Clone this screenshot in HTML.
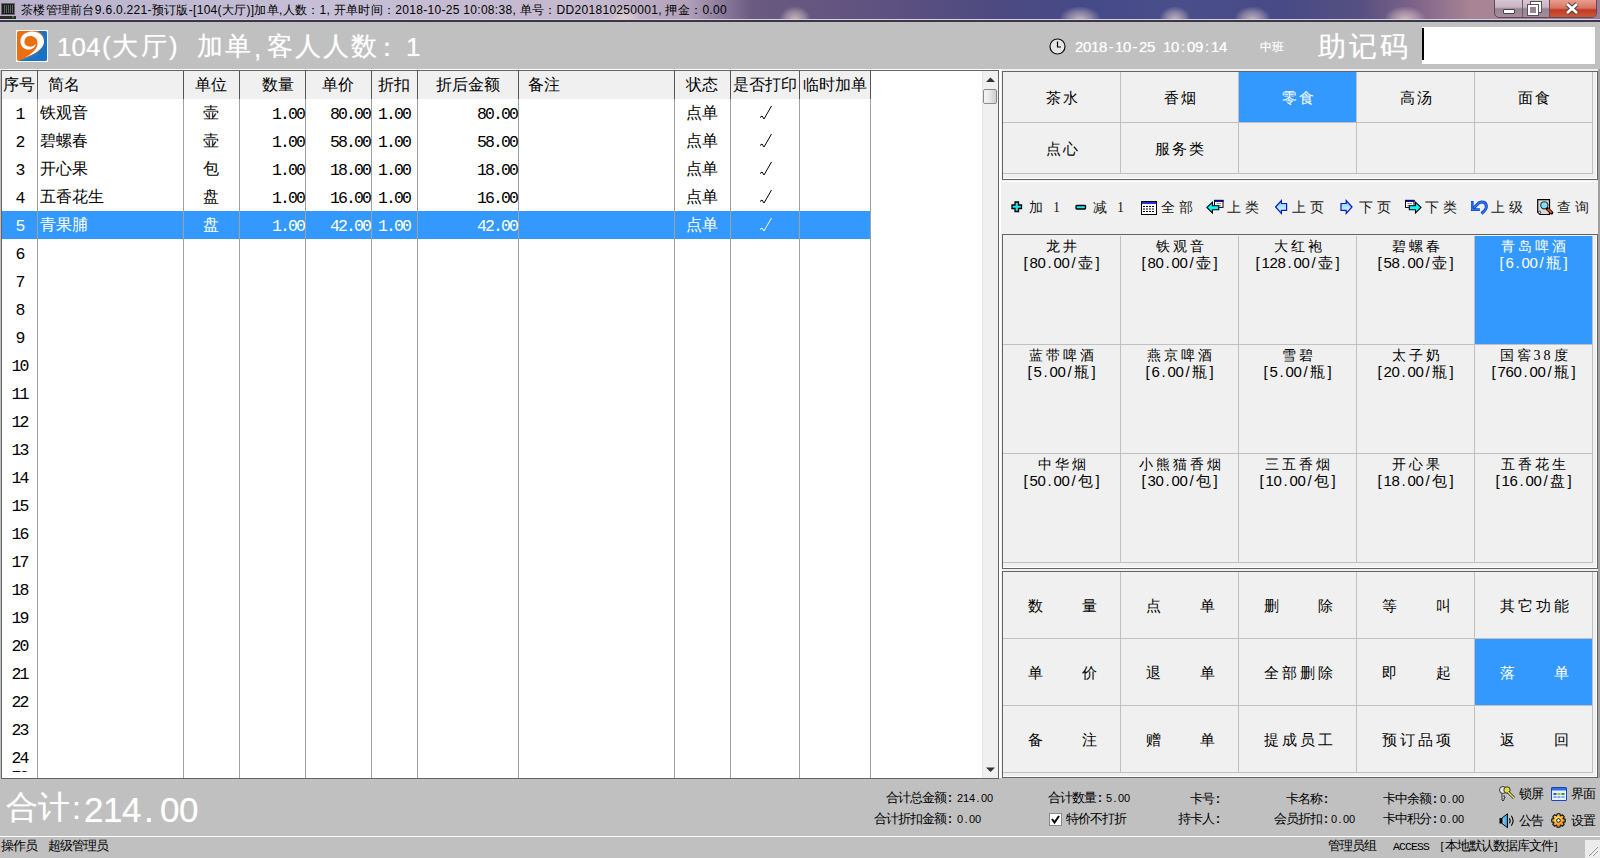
<!DOCTYPE html><html><head><meta charset="utf-8"><style>
*{box-sizing:border-box}
html,body{margin:0;padding:0}
body{width:1600px;height:858px;overflow:hidden;position:relative;background:#c0c0c0;font-family:"Liberation Sans",sans-serif;color:#000}
.a{position:absolute}
.t{position:absolute;white-space:nowrap;line-height:1}
svg{position:absolute;overflow:visible}
</style></head><body>

<div class="a" style="left:0;top:0;width:1600px;height:20px;background:linear-gradient(90deg,#b8b2cc 0%,#c6bfd6 20%,#c4b8cc 38%,#b0a0b8 43%,#6a5a80 47%,#5e5280 55%,#4e4a80 62%,#454a88 68%,#4a4e8a 74%,#474a86 80%,#565080 85%,#7a6088 88%,#a88494 92%,#a88898 96%,#9a7e98 100%)"></div>
<div class="a" style="left:780px;top:7px;width:30px;height:13px;background:radial-gradient(ellipse at 50% 100%,rgba(240,220,210,.75) 0,rgba(240,220,210,.35) 45%,rgba(240,220,210,0) 75%)"></div>
<div class="a" style="left:1060px;top:7px;width:40px;height:13px;background:radial-gradient(ellipse at 50% 100%,rgba(240,220,210,.75) 0,rgba(240,220,210,.35) 45%,rgba(240,220,210,0) 75%)"></div>
<div class="a" style="left:1160px;top:7px;width:30px;height:13px;background:radial-gradient(ellipse at 50% 100%,rgba(240,220,210,.75) 0,rgba(240,220,210,.35) 45%,rgba(240,220,210,0) 75%)"></div>
<div class="a" style="left:1235px;top:7px;width:35px;height:13px;background:radial-gradient(ellipse at 50% 100%,rgba(240,220,210,.75) 0,rgba(240,220,210,.35) 45%,rgba(240,220,210,0) 75%)"></div>
<div class="a" style="left:1385px;top:7px;width:40px;height:13px;background:radial-gradient(ellipse at 50% 100%,rgba(240,220,210,.75) 0,rgba(240,220,210,.35) 45%,rgba(240,220,210,0) 75%)"></div>
<div class="a" style="left:610px;top:7px;width:30px;height:13px;background:radial-gradient(ellipse at 50% 100%,rgba(240,220,210,.75) 0,rgba(240,220,210,.35) 45%,rgba(240,220,210,0) 75%)"></div>
<div class="a" style="left:0;top:19px;width:1600px;height:1px;background:#d8d0e0"></div>
<div class="a" style="left:0;top:20px;width:1600px;height:2px;background:#3a3848"></div>
<svg style="left:0;top:2px" width="17" height="18"><rect x="1.5" y="1.5" width="13" height="11" fill="#1d1d1d" stroke="#666"/><path d="M4 4h9M4 6h9M4 8h9M4 10h9" stroke="#9aa" stroke-width="1" stroke-dasharray="1 1"/><rect x="0" y="14" width="16" height="3" fill="#2a2a2a"/><rect x="12" y="14.5" width="2" height="1" fill="#3c3"/></svg>
<div class="t" style="left:21px;top:4px;font-size:12px;letter-spacing:0.3px;color:#000">茶楼管理前台9.6.0.221-预订版-[104(大厅)]加单,人数：1, 开单时间：2018-10-25 10:08:38, 单号：DD201810250001, 押金：0.00</div>
<div class="a" style="left:1494px;top:-2px;width:103px;height:20px;border:1px solid #5a4a5a;border-radius:0 0 5px 5px;background:linear-gradient(180deg,#d8c8d4 0,#c8b4c4 45%,#9a8494 55%,#a48c9c 100%);overflow:hidden"><div class="a" style="left:27px;top:0;width:1px;height:20px;background:#6a5a6a"></div><div class="a" style="left:54px;top:0;width:48px;height:20px;background:linear-gradient(180deg,#eaa494 0,#d87462 45%,#c23a22 55%,#d0603e 100%)"></div><div class="a" style="left:54px;top:0;width:1px;height:20px;background:#7a4a4a"></div></div>
<div class="a" style="left:1503px;top:9px;width:12px;height:5px;background:#fff;border:1px solid #444;border-radius:1px"></div>
<div class="a" style="left:1531px;top:2px;width:10px;height:10px;border:2px solid #fff;outline:1px solid #555"></div>
<div class="a" style="left:1528px;top:5px;width:10px;height:10px;border:2px solid #fff;outline:1px solid #555;background:#9a8494"></div>
<svg style="left:1565px;top:3px" width="14" height="11"><path d="M2 1 L12 10 M12 1 L2 10" stroke="#444" stroke-width="4.5"/><path d="M2 1 L12 10 M12 1 L2 10" stroke="#fff" stroke-width="2.6"/></svg>
<svg style="left:16px;top:30px" width="32" height="32" viewBox="0 0 32 32"><rect width="32" height="32" fill="#f4f8fc"/><rect x="1" y="1" width="30" height="30" rx="2" fill="#ea6f10"/><path d="M21 1 H29 Q31 1 31 3 V29 Q31 31 29 31 H3 C14 27 27 22 28 12 C28.5 7 26 3 21 1 Z" fill="#1572c6"/><path d="M2 30 C14 26 27 21 28 12 C28 5 22 1 15 1.5 C8 2 4 7 4.5 12 C5 17 9 20 13.5 19.5 C17 19 19.5 17 19.5 14 C18 16 15.5 17 13 16.5 C10 16 8 14 8.5 11 C9 7 12 5.5 15 6 C19 6.5 22 9.5 21.5 14 C21 21 12 27 2 30 Z" fill="#fff"/><path d="M4 30.5 C10 28.5 16 26 21 22.5 M7 30.5 C12 29 17 27 22 24" stroke="#2a80d0" stroke-width="0.7" fill="none"/></svg>
<div class="t" style="left:57px;top:34px;font-size:26px;font-family:'Liberation Sans',sans-serif;color:#fff;text-shadow:0 0 1px rgba(255,255,255,.6);">104</div>
<div class="t" style="left:102px;top:33px;font-size:26px;font-family:'Liberation Sans',sans-serif;color:#fff;text-shadow:0 0 1px rgba(255,255,255,.6);">(</div>
<div class="t" style="left:112px;top:33px;font-size:26px;font-family:'Liberation Sans',sans-serif;color:#fff;text-shadow:0 0 1px rgba(255,255,255,.6);">大</div>
<div class="t" style="left:141px;top:33px;font-size:26px;font-family:'Liberation Sans',sans-serif;color:#fff;text-shadow:0 0 1px rgba(255,255,255,.6);">厅</div>
<div class="t" style="left:169px;top:33px;font-size:26px;font-family:'Liberation Sans',sans-serif;color:#fff;text-shadow:0 0 1px rgba(255,255,255,.6);">)</div>
<div class="t" style="left:197px;top:33px;font-size:26px;font-family:'Liberation Sans',sans-serif;color:#fff;text-shadow:0 0 1px rgba(255,255,255,.6);">加</div>
<div class="t" style="left:225px;top:33px;font-size:26px;font-family:'Liberation Sans',sans-serif;color:#fff;text-shadow:0 0 1px rgba(255,255,255,.6);">单</div>
<div class="t" style="left:254px;top:35px;font-size:26px;font-family:'Liberation Sans',sans-serif;color:#fff;text-shadow:0 0 1px rgba(255,255,255,.6);">,</div>
<div class="t" style="left:267px;top:33px;font-size:26px;font-family:'Liberation Sans',sans-serif;color:#fff;text-shadow:0 0 1px rgba(255,255,255,.6);">客</div>
<div class="t" style="left:295px;top:33px;font-size:26px;font-family:'Liberation Sans',sans-serif;color:#fff;text-shadow:0 0 1px rgba(255,255,255,.6);">人</div>
<div class="t" style="left:323px;top:33px;font-size:26px;font-family:'Liberation Sans',sans-serif;color:#fff;text-shadow:0 0 1px rgba(255,255,255,.6);">人</div>
<div class="t" style="left:351px;top:33px;font-size:26px;font-family:'Liberation Sans',sans-serif;color:#fff;text-shadow:0 0 1px rgba(255,255,255,.6);">数</div>
<div class="t" style="left:380px;top:34px;font-size:26px;font-family:'Liberation Sans',sans-serif;color:#fff;text-shadow:0 0 1px rgba(255,255,255,.6);width:14px;overflow:hidden;text-indent:-6px">：</div>
<div class="t" style="left:406px;top:34px;font-size:26px;font-family:'Liberation Sans',sans-serif;color:#fff;text-shadow:0 0 1px rgba(255,255,255,.6);">1</div>
<svg style="left:1049px;top:38px" width="17" height="17"><circle cx="8.5" cy="8.5" r="7.5" fill="#e6e6e6" stroke="#111" stroke-width="1.2"/><path d="M8.5 3.5 V9 H12" stroke="#000" stroke-width="1.2" fill="none"/></svg>
<div class="t" style="left:1075px;top:39px;font-size:15px;color:#fff;text-shadow:0 0 1px rgba(255,255,255,.6)"><span style="display:inline-block;width:8px;text-align:center;">2</span><span style="display:inline-block;width:8px;text-align:center;">0</span><span style="display:inline-block;width:8px;text-align:center;">1</span><span style="display:inline-block;width:8px;text-align:center;">8</span><span style="display:inline-block;width:8px;text-align:center;">-</span><span style="display:inline-block;width:8px;text-align:center;">1</span><span style="display:inline-block;width:8px;text-align:center;">0</span><span style="display:inline-block;width:8px;text-align:center;">-</span><span style="display:inline-block;width:8px;text-align:center;">2</span><span style="display:inline-block;width:8px;text-align:center;">5</span><span style="display:inline-block;width:8px;text-align:center;"> </span><span style="display:inline-block;width:8px;text-align:center;">1</span><span style="display:inline-block;width:8px;text-align:center;">0</span><span style="display:inline-block;width:8px;text-align:center;">:</span><span style="display:inline-block;width:8px;text-align:center;">0</span><span style="display:inline-block;width:8px;text-align:center;">9</span><span style="display:inline-block;width:8px;text-align:center;">:</span><span style="display:inline-block;width:8px;text-align:center;">1</span><span style="display:inline-block;width:8px;text-align:center;">4</span></div>
<div class="t" style="left:1260px;top:41px;font-size:12px;color:#fff;text-shadow:0 0 1px rgba(255,255,255,.6)">中班</div>
<div class="t" style="left:1318px;top:33px;font-size:28px;letter-spacing:3px;font-family:'Liberation Serif',serif;color:#fff;text-shadow:0 0 1px rgba(255,255,255,.6)">助记码</div>
<div class="a" style="left:1422px;top:27px;width:173px;height:37px;background:#fff"></div>
<div class="a" style="left:1422px;top:28px;width:2px;height:32px;background:#000"></div>
<div class="a" style="left:0;top:69px;width:1000px;height:1px;background:#fff"></div>
<div class="a" style="left:1px;top:70px;width:998px;height:709px;background:#fff;border:1px solid #646464;overflow:hidden">
<div class="a" style="left:0;top:0;width:868px;height:28px;background:#f0f0f0"></div>
<div class="a" style="left:0;top:140px;width:868px;height:28px;background:#3399ff"></div>
<div class="a" style="left:35px;top:0;width:1px;height:28px;background:#555"></div>
<div class="a" style="left:35px;top:28px;width:1px;height:680px;background:#a0a0a0"></div>
<div class="a" style="left:181px;top:0;width:1px;height:28px;background:#555"></div>
<div class="a" style="left:181px;top:28px;width:1px;height:680px;background:#a0a0a0"></div>
<div class="a" style="left:237px;top:0;width:1px;height:28px;background:#555"></div>
<div class="a" style="left:237px;top:28px;width:1px;height:680px;background:#a0a0a0"></div>
<div class="a" style="left:303px;top:0;width:1px;height:28px;background:#555"></div>
<div class="a" style="left:303px;top:28px;width:1px;height:680px;background:#a0a0a0"></div>
<div class="a" style="left:369px;top:0;width:1px;height:28px;background:#555"></div>
<div class="a" style="left:369px;top:28px;width:1px;height:680px;background:#a0a0a0"></div>
<div class="a" style="left:415px;top:0;width:1px;height:28px;background:#555"></div>
<div class="a" style="left:415px;top:28px;width:1px;height:680px;background:#a0a0a0"></div>
<div class="a" style="left:516px;top:0;width:1px;height:28px;background:#555"></div>
<div class="a" style="left:516px;top:28px;width:1px;height:680px;background:#a0a0a0"></div>
<div class="a" style="left:672px;top:0;width:1px;height:28px;background:#555"></div>
<div class="a" style="left:672px;top:28px;width:1px;height:680px;background:#a0a0a0"></div>
<div class="a" style="left:728px;top:0;width:1px;height:28px;background:#555"></div>
<div class="a" style="left:728px;top:28px;width:1px;height:680px;background:#a0a0a0"></div>
<div class="a" style="left:797px;top:0;width:1px;height:28px;background:#555"></div>
<div class="a" style="left:797px;top:28px;width:1px;height:680px;background:#a0a0a0"></div>
<div class="a" style="left:868px;top:0;width:1px;height:28px;background:#555"></div>
<div class="a" style="left:868px;top:28px;width:1px;height:680px;background:#a0a0a0"></div>
<div class="t" style="left:1px;top:6px;font-size:16px">序号</div>
<div class="t" style="left:46px;top:6px;font-size:16px">简名</div>
<div class="t" style="left:181px;top:6px;width:56px;text-align:center;font-size:16px">单位</div>
<div class="t" style="left:260px;top:6px;font-size:16px">数量</div>
<div class="t" style="left:303px;top:6px;width:66px;text-align:center;font-size:16px">单价</div>
<div class="t" style="left:369px;top:6px;width:46px;text-align:center;font-size:16px">折扣</div>
<div class="t" style="left:415px;top:6px;width:101px;text-align:center;font-size:16px">折后金额</div>
<div class="t" style="left:526px;top:6px;font-size:16px">备注</div>
<div class="t" style="left:672px;top:6px;width:56px;text-align:center;font-size:16px">状态</div>
<div class="t" style="left:728px;top:6px;width:69px;text-align:center;font-size:16px">是否打印</div>
<div class="t" style="left:797px;top:6px;width:71px;text-align:center;font-size:16px">临时加单</div>
<div class="t" style="left:0;top:36px;width:35px;text-align:center;font-family:'Liberation Mono',monospace;font-size:16.5px;letter-spacing:-1.9px;color:#000">1</div>
<div class="t" style="left:38px;top:34px;font-size:16px;color:#000">铁观音</div>
<div class="t" style="left:181px;top:34px;width:56px;text-align:center;font-size:16px;color:#000">壶</div>
<div class="t" style="left:237px;top:36px;width:65px;text-align:right;font-family:'Liberation Mono',monospace;font-size:16.5px;letter-spacing:-1.9px;color:#000">1.00</div>
<div class="t" style="left:303px;top:36px;width:65px;text-align:right;font-family:'Liberation Mono',monospace;font-size:16.5px;letter-spacing:-1.9px;color:#000">80.00</div>
<div class="t" style="left:369px;top:36px;width:46px;text-align:center;font-family:'Liberation Mono',monospace;font-size:16.5px;letter-spacing:-1.9px;color:#000">1.00</div>
<div class="t" style="left:415px;top:36px;width:100px;text-align:right;font-family:'Liberation Mono',monospace;font-size:16.5px;letter-spacing:-1.9px;color:#000">80.00</div>
<div class="t" style="left:672px;top:34px;width:56px;text-align:center;font-size:16px;color:#000">点单</div>
<svg style="left:757px;top:34px" width="14" height="16" viewBox="0 0 14 16"><path d="M1 12.5 L3 11 L5 14 L12.5 1" stroke="#000" stroke-width="1" fill="none"/></svg>
<div class="t" style="left:0;top:64px;width:35px;text-align:center;font-family:'Liberation Mono',monospace;font-size:16.5px;letter-spacing:-1.9px;color:#000">2</div>
<div class="t" style="left:38px;top:62px;font-size:16px;color:#000">碧螺春</div>
<div class="t" style="left:181px;top:62px;width:56px;text-align:center;font-size:16px;color:#000">壶</div>
<div class="t" style="left:237px;top:64px;width:65px;text-align:right;font-family:'Liberation Mono',monospace;font-size:16.5px;letter-spacing:-1.9px;color:#000">1.00</div>
<div class="t" style="left:303px;top:64px;width:65px;text-align:right;font-family:'Liberation Mono',monospace;font-size:16.5px;letter-spacing:-1.9px;color:#000">58.00</div>
<div class="t" style="left:369px;top:64px;width:46px;text-align:center;font-family:'Liberation Mono',monospace;font-size:16.5px;letter-spacing:-1.9px;color:#000">1.00</div>
<div class="t" style="left:415px;top:64px;width:100px;text-align:right;font-family:'Liberation Mono',monospace;font-size:16.5px;letter-spacing:-1.9px;color:#000">58.00</div>
<div class="t" style="left:672px;top:62px;width:56px;text-align:center;font-size:16px;color:#000">点单</div>
<svg style="left:757px;top:62px" width="14" height="16" viewBox="0 0 14 16"><path d="M1 12.5 L3 11 L5 14 L12.5 1" stroke="#000" stroke-width="1" fill="none"/></svg>
<div class="t" style="left:0;top:92px;width:35px;text-align:center;font-family:'Liberation Mono',monospace;font-size:16.5px;letter-spacing:-1.9px;color:#000">3</div>
<div class="t" style="left:38px;top:90px;font-size:16px;color:#000">开心果</div>
<div class="t" style="left:181px;top:90px;width:56px;text-align:center;font-size:16px;color:#000">包</div>
<div class="t" style="left:237px;top:92px;width:65px;text-align:right;font-family:'Liberation Mono',monospace;font-size:16.5px;letter-spacing:-1.9px;color:#000">1.00</div>
<div class="t" style="left:303px;top:92px;width:65px;text-align:right;font-family:'Liberation Mono',monospace;font-size:16.5px;letter-spacing:-1.9px;color:#000">18.00</div>
<div class="t" style="left:369px;top:92px;width:46px;text-align:center;font-family:'Liberation Mono',monospace;font-size:16.5px;letter-spacing:-1.9px;color:#000">1.00</div>
<div class="t" style="left:415px;top:92px;width:100px;text-align:right;font-family:'Liberation Mono',monospace;font-size:16.5px;letter-spacing:-1.9px;color:#000">18.00</div>
<div class="t" style="left:672px;top:90px;width:56px;text-align:center;font-size:16px;color:#000">点单</div>
<svg style="left:757px;top:90px" width="14" height="16" viewBox="0 0 14 16"><path d="M1 12.5 L3 11 L5 14 L12.5 1" stroke="#000" stroke-width="1" fill="none"/></svg>
<div class="t" style="left:0;top:120px;width:35px;text-align:center;font-family:'Liberation Mono',monospace;font-size:16.5px;letter-spacing:-1.9px;color:#000">4</div>
<div class="t" style="left:38px;top:118px;font-size:16px;color:#000">五香花生</div>
<div class="t" style="left:181px;top:118px;width:56px;text-align:center;font-size:16px;color:#000">盘</div>
<div class="t" style="left:237px;top:120px;width:65px;text-align:right;font-family:'Liberation Mono',monospace;font-size:16.5px;letter-spacing:-1.9px;color:#000">1.00</div>
<div class="t" style="left:303px;top:120px;width:65px;text-align:right;font-family:'Liberation Mono',monospace;font-size:16.5px;letter-spacing:-1.9px;color:#000">16.00</div>
<div class="t" style="left:369px;top:120px;width:46px;text-align:center;font-family:'Liberation Mono',monospace;font-size:16.5px;letter-spacing:-1.9px;color:#000">1.00</div>
<div class="t" style="left:415px;top:120px;width:100px;text-align:right;font-family:'Liberation Mono',monospace;font-size:16.5px;letter-spacing:-1.9px;color:#000">16.00</div>
<div class="t" style="left:672px;top:118px;width:56px;text-align:center;font-size:16px;color:#000">点单</div>
<svg style="left:757px;top:118px" width="14" height="16" viewBox="0 0 14 16"><path d="M1 12.5 L3 11 L5 14 L12.5 1" stroke="#000" stroke-width="1" fill="none"/></svg>
<div class="t" style="left:0;top:148px;width:35px;text-align:center;font-family:'Liberation Mono',monospace;font-size:16.5px;letter-spacing:-1.9px;color:#fff">5</div>
<div class="t" style="left:38px;top:146px;font-size:16px;color:#fff">青果脯</div>
<div class="t" style="left:181px;top:146px;width:56px;text-align:center;font-size:16px;color:#fff">盘</div>
<div class="t" style="left:237px;top:148px;width:65px;text-align:right;font-family:'Liberation Mono',monospace;font-size:16.5px;letter-spacing:-1.9px;color:#fff">1.00</div>
<div class="t" style="left:303px;top:148px;width:65px;text-align:right;font-family:'Liberation Mono',monospace;font-size:16.5px;letter-spacing:-1.9px;color:#fff">42.00</div>
<div class="t" style="left:369px;top:148px;width:46px;text-align:center;font-family:'Liberation Mono',monospace;font-size:16.5px;letter-spacing:-1.9px;color:#fff">1.00</div>
<div class="t" style="left:415px;top:148px;width:100px;text-align:right;font-family:'Liberation Mono',monospace;font-size:16.5px;letter-spacing:-1.9px;color:#fff">42.00</div>
<div class="t" style="left:672px;top:146px;width:56px;text-align:center;font-size:16px;color:#fff">点单</div>
<svg style="left:757px;top:146px" width="14" height="16" viewBox="0 0 14 16"><path d="M1 12.5 L3 11 L5 14 L12.5 1" stroke="#fff" stroke-width="1" fill="none"/></svg>
<div class="t" style="left:0;top:176px;width:35px;text-align:center;font-family:'Liberation Mono',monospace;font-size:16.5px;letter-spacing:-1.9px;color:#000">6</div>
<div class="t" style="left:0;top:204px;width:35px;text-align:center;font-family:'Liberation Mono',monospace;font-size:16.5px;letter-spacing:-1.9px;color:#000">7</div>
<div class="t" style="left:0;top:232px;width:35px;text-align:center;font-family:'Liberation Mono',monospace;font-size:16.5px;letter-spacing:-1.9px;color:#000">8</div>
<div class="t" style="left:0;top:260px;width:35px;text-align:center;font-family:'Liberation Mono',monospace;font-size:16.5px;letter-spacing:-1.9px;color:#000">9</div>
<div class="t" style="left:0;top:288px;width:35px;text-align:center;font-family:'Liberation Mono',monospace;font-size:16.5px;letter-spacing:-1.9px;color:#000">10</div>
<div class="t" style="left:0;top:316px;width:35px;text-align:center;font-family:'Liberation Mono',monospace;font-size:16.5px;letter-spacing:-1.9px;color:#000">11</div>
<div class="t" style="left:0;top:344px;width:35px;text-align:center;font-family:'Liberation Mono',monospace;font-size:16.5px;letter-spacing:-1.9px;color:#000">12</div>
<div class="t" style="left:0;top:372px;width:35px;text-align:center;font-family:'Liberation Mono',monospace;font-size:16.5px;letter-spacing:-1.9px;color:#000">13</div>
<div class="t" style="left:0;top:400px;width:35px;text-align:center;font-family:'Liberation Mono',monospace;font-size:16.5px;letter-spacing:-1.9px;color:#000">14</div>
<div class="t" style="left:0;top:428px;width:35px;text-align:center;font-family:'Liberation Mono',monospace;font-size:16.5px;letter-spacing:-1.9px;color:#000">15</div>
<div class="t" style="left:0;top:456px;width:35px;text-align:center;font-family:'Liberation Mono',monospace;font-size:16.5px;letter-spacing:-1.9px;color:#000">16</div>
<div class="t" style="left:0;top:484px;width:35px;text-align:center;font-family:'Liberation Mono',monospace;font-size:16.5px;letter-spacing:-1.9px;color:#000">17</div>
<div class="t" style="left:0;top:512px;width:35px;text-align:center;font-family:'Liberation Mono',monospace;font-size:16.5px;letter-spacing:-1.9px;color:#000">18</div>
<div class="t" style="left:0;top:540px;width:35px;text-align:center;font-family:'Liberation Mono',monospace;font-size:16.5px;letter-spacing:-1.9px;color:#000">19</div>
<div class="t" style="left:0;top:568px;width:35px;text-align:center;font-family:'Liberation Mono',monospace;font-size:16.5px;letter-spacing:-1.9px;color:#000">20</div>
<div class="t" style="left:0;top:596px;width:35px;text-align:center;font-family:'Liberation Mono',monospace;font-size:16.5px;letter-spacing:-1.9px;color:#000">21</div>
<div class="t" style="left:0;top:624px;width:35px;text-align:center;font-family:'Liberation Mono',monospace;font-size:16.5px;letter-spacing:-1.9px;color:#000">22</div>
<div class="t" style="left:0;top:652px;width:35px;text-align:center;font-family:'Liberation Mono',monospace;font-size:16.5px;letter-spacing:-1.9px;color:#000">23</div>
<div class="t" style="left:0;top:680px;width:35px;text-align:center;font-family:'Liberation Mono',monospace;font-size:16.5px;letter-spacing:-1.9px;color:#000">24</div>
<div class="t" style="left:0;top:708px;width:35px;text-align:center;font-family:'Liberation Mono',monospace;font-size:16.5px;letter-spacing:-1.9px;color:#000">25</div>
<div class="a" style="left:0;top:700px;width:35px;height:7px;overflow:hidden"><div class="t" style="left:0;top:-11px;width:35px;text-align:center;font-family:'Liberation Mono',monospace;font-size:16.5px;letter-spacing:-1.9px">25</div></div>
<div class="a" style="left:980px;top:0;width:16px;height:707px;background:#f0f0f0;border-left:1px solid #e6e6e6"></div>
<svg style="left:984px;top:6px" width="9" height="5"><path d="M0 5 L4.5 0.5 L9 5Z" fill="#333"/></svg>
<div class="a" style="left:981px;top:18px;width:14px;height:15px;border:1px solid #8a8a8a;border-radius:2px;background:linear-gradient(90deg,#f6f6f6,#e6e6e6 50%,#cdcdd2)"></div>
<svg style="left:984px;top:696px" width="9" height="5"><path d="M0 0.5 L4.5 5 L9 0.5Z" fill="#333"/></svg>
</div>
<div class="a" style="left:999px;top:69px;width:601px;height:709px;background:#f0f0f0"></div>
<div class="a" style="left:999px;top:69px;width:2px;height:709px;background:#fff"></div>
<div class="a" style="left:1598px;top:69px;width:2px;height:709px;background:#a0a0a0"></div>
<div class="a" style="left:1002px;top:71px;width:596px;height:109px;border:1px solid #646464"></div>
<div class="a" style="left:1003px;top:178px;width:594px;height:1px;background:#fff"></div>
<div class="a" style="left:1596px;top:72px;width:1px;height:107px;background:#fff"></div>
<div class="a" style="left:1239px;top:72px;width:117px;height:50px;background:#3399ff"></div>
<div class="a" style="left:1003px;top:122px;width:590px;height:1px;background:#c0c0c0"></div>
<div class="a" style="left:1003px;top:173px;width:590px;height:1px;background:#c0c0c0"></div>
<div class="a" style="left:1120px;top:72px;width:1px;height:102px;background:#c0c0c0"></div>
<div class="a" style="left:1238px;top:72px;width:1px;height:102px;background:#c0c0c0"></div>
<div class="a" style="left:1356px;top:72px;width:1px;height:102px;background:#c0c0c0"></div>
<div class="a" style="left:1474px;top:72px;width:1px;height:102px;background:#c0c0c0"></div>
<div class="a" style="left:1592px;top:72px;width:1px;height:102px;background:#c0c0c0"></div>
<div class="t" style="left:1004px;top:91px;width:117px;text-align:center;font-size:15px;letter-spacing:2px;font-family:'Liberation Serif',serif;color:#000">茶水</div>
<div class="t" style="left:1122px;top:91px;width:117px;text-align:center;font-size:15px;letter-spacing:2px;font-family:'Liberation Serif',serif;color:#000">香烟</div>
<div class="t" style="left:1240px;top:91px;width:117px;text-align:center;font-size:15px;letter-spacing:2px;font-family:'Liberation Serif',serif;color:#fff">零食</div>
<div class="t" style="left:1358px;top:91px;width:117px;text-align:center;font-size:15px;letter-spacing:2px;font-family:'Liberation Serif',serif;color:#000">高汤</div>
<div class="t" style="left:1476px;top:91px;width:117px;text-align:center;font-size:15px;letter-spacing:2px;font-family:'Liberation Serif',serif;color:#000">面食</div>
<div class="t" style="left:1004px;top:142px;width:117px;text-align:center;font-size:15px;letter-spacing:2px;font-family:'Liberation Serif',serif;color:#000">点心</div>
<div class="t" style="left:1122px;top:142px;width:117px;text-align:center;font-size:15px;letter-spacing:2px;font-family:'Liberation Serif',serif;color:#000">服务类</div>
<div class="a" style="left:1003px;top:181px;width:593px;height:1px;background:#fff"></div>
<div class="t" style="left:1029px;top:201px;font-size:14px;font-family:'Liberation Serif',serif;color:#1a1a1a">加</div>
<div class="t" style="left:1053px;top:201px;font-size:14px;font-family:'Liberation Serif',serif;color:#1a1a1a">1</div>
<div class="t" style="left:1093px;top:201px;font-size:14px;font-family:'Liberation Serif',serif;color:#1a1a1a">减</div>
<div class="t" style="left:1117px;top:201px;font-size:14px;font-family:'Liberation Serif',serif;color:#1a1a1a">1</div>
<div class="t" style="left:1161px;top:201px;font-size:14px;font-family:'Liberation Serif',serif;color:#1a1a1a">全 部</div>
<div class="t" style="left:1227px;top:201px;font-size:14px;font-family:'Liberation Serif',serif;color:#1a1a1a">上 类</div>
<div class="t" style="left:1292px;top:201px;font-size:14px;font-family:'Liberation Serif',serif;color:#1a1a1a">上 页</div>
<div class="t" style="left:1359px;top:201px;font-size:14px;font-family:'Liberation Serif',serif;color:#1a1a1a">下 页</div>
<div class="t" style="left:1425px;top:201px;font-size:14px;font-family:'Liberation Serif',serif;color:#1a1a1a">下 类</div>
<div class="t" style="left:1491px;top:201px;font-size:14px;font-family:'Liberation Serif',serif;color:#1a1a1a">上 级</div>
<div class="t" style="left:1557px;top:201px;font-size:14px;font-family:'Liberation Serif',serif;color:#1a1a1a">查 询</div>
<svg style="left:1011px;top:201px" width="13" height="13"><path d="M4 1 H7.5 V4 H10.5 V7.5 H7.5 V10.5 H4 V7.5 H1 V4 H4Z" fill="#22e8f0" stroke="#000" stroke-width="1.3"/></svg>
<svg style="left:1075px;top:204px" width="13" height="8"><rect x="1" y="1.5" width="9.5" height="3.5" rx="0.8" fill="#22e8f0" stroke="#000" stroke-width="1.3"/></svg>
<svg style="left:1141px;top:201px" width="17" height="14"><rect x="0.5" y="0.5" width="15" height="13" fill="#fff" stroke="#000"/><rect x="1" y="1" width="14" height="2" fill="#2233dd"/><path d="M2 5.5h12M2 8h12M2 10.5h12" stroke="#000" stroke-dasharray="2 1"/></svg>
<svg style="left:1206px;top:199px" width="19" height="16"><rect x="8.5" y="1.4" width="8.5" height="7" fill="#fff" stroke="#000" stroke-width="1"/><rect x="8" y="0.9" width="9.5" height="2" fill="#000080"/><path d="M10.5 4.5 H15 M10.5 6.5 H15" stroke="#777" stroke-width="0.8"/><path d="M0.9 8.5 L6.4 3.2 V6.7 H12.7 V10.7 H6.4 V13.9 Z" fill="#00ffff" stroke="#000" stroke-width="1.1" stroke-linejoin="miter"/></svg>
<svg style="left:1275px;top:200px" width="14" height="15"><defs><linearGradient id="ga" x1="0" y1="0" x2="0" y2="1"><stop offset="0" stop-color="#70d0f8"/><stop offset="1" stop-color="#f0fcff"/></linearGradient></defs><path d="M0.6 7 L6.4 0.6 V3.5 H11.6 V10.4 H6.4 V13.4 Z" fill="url(#ga)" stroke="#0818c8" stroke-width="1.2" stroke-linejoin="miter"/></svg>
<svg style="left:1339px;top:200px" width="14" height="15"><path d="M13 7 L7.2 0.6 V3.5 H2 V10.4 H7.2 V13.4 Z" fill="url(#ga)" stroke="#0818c8" stroke-width="1.2" stroke-linejoin="miter"/></svg>
<svg style="left:1404px;top:199px" width="19" height="16"><rect x="1.5" y="1.4" width="8.5" height="7" fill="#fff" stroke="#000" stroke-width="1"/><rect x="1" y="0.9" width="9.5" height="2" fill="#000080"/><path d="M3.5 4.5 H8 M3.5 6.5 H8" stroke="#777" stroke-width="0.8"/><path d="M17 8.5 L11.5 3.2 V6.7 H5.3 V10.7 H11.5 V13.9 Z" fill="#00ffff" stroke="#000" stroke-width="1.1" stroke-linejoin="miter"/></svg>
<svg style="left:1470px;top:200px" width="18" height="15"><path d="M2.3 9.5 L9 2.8 Q12 1.2 14.5 2.6 Q16.5 4 16.3 7.2 Q16 10 11.5 13.5" stroke="#0a3cc0" stroke-width="3" fill="none"/><path d="M2.3 9.5 L9 2.8 Q12 1.2 14.5 2.6 Q16.5 4 16.3 7.2 Q16 10 11.5 13.5" stroke="#2a8af0" stroke-width="1.2" fill="none"/><path d="M1 1 H3.6 V8.3 H9.8 V10.9 H1Z" fill="#0a44cc"/><path d="M2 2 V9.8 H9" stroke="#3aa0ff" stroke-width="0.8" fill="none"/></svg>
<svg style="left:1537px;top:199px" width="17" height="17"><path d="M0.7 0.7 H12.5 V15.5 H3 L0.7 13.3Z" fill="#dadada" stroke="#000" stroke-width="1.2"/><circle cx="2.5" cy="13.5" r="1.2" fill="#fff" stroke="#000" stroke-width="0.8"/><circle cx="7.3" cy="6.3" r="3.6" fill="#7fe0ff" stroke="#333" stroke-width="1.1"/><path d="M10.6 10 L14.6 13.8" stroke="#000" stroke-width="3.4" stroke-linecap="round"/><path d="M10.6 10 L14.6 13.8" stroke="#f04818" stroke-width="2"/></svg>
<div class="a" style="left:1002px;top:234px;width:596px;height:335px;border:1px solid #646464"></div>
<div class="a" style="left:1003px;top:567px;width:594px;height:1px;background:#fff"></div>
<div class="a" style="left:1596px;top:235px;width:1px;height:333px;background:#fff"></div>
<div class="a" style="left:1475px;top:236px;width:117px;height:108px;background:#3399ff"></div>
<div class="a" style="left:1003px;top:344px;width:590px;height:1px;background:#c0c0c0"></div>
<div class="a" style="left:1003px;top:453px;width:590px;height:1px;background:#c0c0c0"></div>
<div class="a" style="left:1003px;top:562px;width:590px;height:1px;background:#c0c0c0"></div>
<div class="a" style="left:1120px;top:236px;width:1px;height:327px;background:#c0c0c0"></div>
<div class="a" style="left:1238px;top:236px;width:1px;height:327px;background:#c0c0c0"></div>
<div class="a" style="left:1356px;top:236px;width:1px;height:327px;background:#c0c0c0"></div>
<div class="a" style="left:1474px;top:236px;width:1px;height:327px;background:#c0c0c0"></div>
<div class="a" style="left:1592px;top:236px;width:1px;height:327px;background:#c0c0c0"></div>
<div class="t" style="left:1003px;top:240px;width:117px;text-align:center;font-size:14px;letter-spacing:3px;text-indent:3px;font-family:'Liberation Serif',serif;color:#000">龙井</div>
<div class="t" style="left:1003px;top:255px;width:117px;text-align:center;font-size:15px;font-family:'Liberation Sans',sans-serif;color:#000"><span style="display:inline-block;width:8px;text-align:center;">[</span><span style="display:inline-block;width:8px;text-align:center;">8</span><span style="display:inline-block;width:8px;text-align:center;">0</span><span style="display:inline-block;width:8px;text-align:center;">.</span><span style="display:inline-block;width:8px;text-align:center;">0</span><span style="display:inline-block;width:8px;text-align:center;">0</span><span style="display:inline-block;width:8px;text-align:center;">/</span><span style="display:inline-block;width:16px;text-align:center;">壶</span><span style="display:inline-block;width:8px;text-align:center;">]</span></div>
<div class="t" style="left:1121px;top:240px;width:117px;text-align:center;font-size:14px;letter-spacing:3px;text-indent:3px;font-family:'Liberation Serif',serif;color:#000">铁观音</div>
<div class="t" style="left:1121px;top:255px;width:117px;text-align:center;font-size:15px;font-family:'Liberation Sans',sans-serif;color:#000"><span style="display:inline-block;width:8px;text-align:center;">[</span><span style="display:inline-block;width:8px;text-align:center;">8</span><span style="display:inline-block;width:8px;text-align:center;">0</span><span style="display:inline-block;width:8px;text-align:center;">.</span><span style="display:inline-block;width:8px;text-align:center;">0</span><span style="display:inline-block;width:8px;text-align:center;">0</span><span style="display:inline-block;width:8px;text-align:center;">/</span><span style="display:inline-block;width:16px;text-align:center;">壶</span><span style="display:inline-block;width:8px;text-align:center;">]</span></div>
<div class="t" style="left:1239px;top:240px;width:117px;text-align:center;font-size:14px;letter-spacing:3px;text-indent:3px;font-family:'Liberation Serif',serif;color:#000">大红袍</div>
<div class="t" style="left:1239px;top:255px;width:117px;text-align:center;font-size:15px;font-family:'Liberation Sans',sans-serif;color:#000"><span style="display:inline-block;width:8px;text-align:center;">[</span><span style="display:inline-block;width:8px;text-align:center;">1</span><span style="display:inline-block;width:8px;text-align:center;">2</span><span style="display:inline-block;width:8px;text-align:center;">8</span><span style="display:inline-block;width:8px;text-align:center;">.</span><span style="display:inline-block;width:8px;text-align:center;">0</span><span style="display:inline-block;width:8px;text-align:center;">0</span><span style="display:inline-block;width:8px;text-align:center;">/</span><span style="display:inline-block;width:16px;text-align:center;">壶</span><span style="display:inline-block;width:8px;text-align:center;">]</span></div>
<div class="t" style="left:1357px;top:240px;width:117px;text-align:center;font-size:14px;letter-spacing:3px;text-indent:3px;font-family:'Liberation Serif',serif;color:#000">碧螺春</div>
<div class="t" style="left:1357px;top:255px;width:117px;text-align:center;font-size:15px;font-family:'Liberation Sans',sans-serif;color:#000"><span style="display:inline-block;width:8px;text-align:center;">[</span><span style="display:inline-block;width:8px;text-align:center;">5</span><span style="display:inline-block;width:8px;text-align:center;">8</span><span style="display:inline-block;width:8px;text-align:center;">.</span><span style="display:inline-block;width:8px;text-align:center;">0</span><span style="display:inline-block;width:8px;text-align:center;">0</span><span style="display:inline-block;width:8px;text-align:center;">/</span><span style="display:inline-block;width:16px;text-align:center;">壶</span><span style="display:inline-block;width:8px;text-align:center;">]</span></div>
<div class="t" style="left:1475px;top:240px;width:117px;text-align:center;font-size:14px;letter-spacing:3px;text-indent:3px;font-family:'Liberation Serif',serif;color:#fff">青岛啤酒</div>
<div class="t" style="left:1475px;top:255px;width:117px;text-align:center;font-size:15px;font-family:'Liberation Sans',sans-serif;color:#fff"><span style="display:inline-block;width:8px;text-align:center;">[</span><span style="display:inline-block;width:8px;text-align:center;">6</span><span style="display:inline-block;width:8px;text-align:center;">.</span><span style="display:inline-block;width:8px;text-align:center;">0</span><span style="display:inline-block;width:8px;text-align:center;">0</span><span style="display:inline-block;width:8px;text-align:center;">/</span><span style="display:inline-block;width:16px;text-align:center;">瓶</span><span style="display:inline-block;width:8px;text-align:center;">]</span></div>
<div class="t" style="left:1003px;top:349px;width:117px;text-align:center;font-size:14px;letter-spacing:3px;text-indent:3px;font-family:'Liberation Serif',serif;color:#000">蓝带啤酒</div>
<div class="t" style="left:1003px;top:364px;width:117px;text-align:center;font-size:15px;font-family:'Liberation Sans',sans-serif;color:#000"><span style="display:inline-block;width:8px;text-align:center;">[</span><span style="display:inline-block;width:8px;text-align:center;">5</span><span style="display:inline-block;width:8px;text-align:center;">.</span><span style="display:inline-block;width:8px;text-align:center;">0</span><span style="display:inline-block;width:8px;text-align:center;">0</span><span style="display:inline-block;width:8px;text-align:center;">/</span><span style="display:inline-block;width:16px;text-align:center;">瓶</span><span style="display:inline-block;width:8px;text-align:center;">]</span></div>
<div class="t" style="left:1121px;top:349px;width:117px;text-align:center;font-size:14px;letter-spacing:3px;text-indent:3px;font-family:'Liberation Serif',serif;color:#000">燕京啤酒</div>
<div class="t" style="left:1121px;top:364px;width:117px;text-align:center;font-size:15px;font-family:'Liberation Sans',sans-serif;color:#000"><span style="display:inline-block;width:8px;text-align:center;">[</span><span style="display:inline-block;width:8px;text-align:center;">6</span><span style="display:inline-block;width:8px;text-align:center;">.</span><span style="display:inline-block;width:8px;text-align:center;">0</span><span style="display:inline-block;width:8px;text-align:center;">0</span><span style="display:inline-block;width:8px;text-align:center;">/</span><span style="display:inline-block;width:16px;text-align:center;">瓶</span><span style="display:inline-block;width:8px;text-align:center;">]</span></div>
<div class="t" style="left:1239px;top:349px;width:117px;text-align:center;font-size:14px;letter-spacing:3px;text-indent:3px;font-family:'Liberation Serif',serif;color:#000">雪碧</div>
<div class="t" style="left:1239px;top:364px;width:117px;text-align:center;font-size:15px;font-family:'Liberation Sans',sans-serif;color:#000"><span style="display:inline-block;width:8px;text-align:center;">[</span><span style="display:inline-block;width:8px;text-align:center;">5</span><span style="display:inline-block;width:8px;text-align:center;">.</span><span style="display:inline-block;width:8px;text-align:center;">0</span><span style="display:inline-block;width:8px;text-align:center;">0</span><span style="display:inline-block;width:8px;text-align:center;">/</span><span style="display:inline-block;width:16px;text-align:center;">瓶</span><span style="display:inline-block;width:8px;text-align:center;">]</span></div>
<div class="t" style="left:1357px;top:349px;width:117px;text-align:center;font-size:14px;letter-spacing:3px;text-indent:3px;font-family:'Liberation Serif',serif;color:#000">太子奶</div>
<div class="t" style="left:1357px;top:364px;width:117px;text-align:center;font-size:15px;font-family:'Liberation Sans',sans-serif;color:#000"><span style="display:inline-block;width:8px;text-align:center;">[</span><span style="display:inline-block;width:8px;text-align:center;">2</span><span style="display:inline-block;width:8px;text-align:center;">0</span><span style="display:inline-block;width:8px;text-align:center;">.</span><span style="display:inline-block;width:8px;text-align:center;">0</span><span style="display:inline-block;width:8px;text-align:center;">0</span><span style="display:inline-block;width:8px;text-align:center;">/</span><span style="display:inline-block;width:16px;text-align:center;">瓶</span><span style="display:inline-block;width:8px;text-align:center;">]</span></div>
<div class="t" style="left:1475px;top:349px;width:117px;text-align:center;font-size:14px;letter-spacing:3px;text-indent:3px;font-family:'Liberation Serif',serif;color:#000">国窖38度</div>
<div class="t" style="left:1475px;top:364px;width:117px;text-align:center;font-size:15px;font-family:'Liberation Sans',sans-serif;color:#000"><span style="display:inline-block;width:8px;text-align:center;">[</span><span style="display:inline-block;width:8px;text-align:center;">7</span><span style="display:inline-block;width:8px;text-align:center;">6</span><span style="display:inline-block;width:8px;text-align:center;">0</span><span style="display:inline-block;width:8px;text-align:center;">.</span><span style="display:inline-block;width:8px;text-align:center;">0</span><span style="display:inline-block;width:8px;text-align:center;">0</span><span style="display:inline-block;width:8px;text-align:center;">/</span><span style="display:inline-block;width:16px;text-align:center;">瓶</span><span style="display:inline-block;width:8px;text-align:center;">]</span></div>
<div class="t" style="left:1003px;top:458px;width:117px;text-align:center;font-size:14px;letter-spacing:3px;text-indent:3px;font-family:'Liberation Serif',serif;color:#000">中华烟</div>
<div class="t" style="left:1003px;top:473px;width:117px;text-align:center;font-size:15px;font-family:'Liberation Sans',sans-serif;color:#000"><span style="display:inline-block;width:8px;text-align:center;">[</span><span style="display:inline-block;width:8px;text-align:center;">5</span><span style="display:inline-block;width:8px;text-align:center;">0</span><span style="display:inline-block;width:8px;text-align:center;">.</span><span style="display:inline-block;width:8px;text-align:center;">0</span><span style="display:inline-block;width:8px;text-align:center;">0</span><span style="display:inline-block;width:8px;text-align:center;">/</span><span style="display:inline-block;width:16px;text-align:center;">包</span><span style="display:inline-block;width:8px;text-align:center;">]</span></div>
<div class="t" style="left:1121px;top:458px;width:117px;text-align:center;font-size:14px;letter-spacing:3px;text-indent:3px;font-family:'Liberation Serif',serif;color:#000">小熊猫香烟</div>
<div class="t" style="left:1121px;top:473px;width:117px;text-align:center;font-size:15px;font-family:'Liberation Sans',sans-serif;color:#000"><span style="display:inline-block;width:8px;text-align:center;">[</span><span style="display:inline-block;width:8px;text-align:center;">3</span><span style="display:inline-block;width:8px;text-align:center;">0</span><span style="display:inline-block;width:8px;text-align:center;">.</span><span style="display:inline-block;width:8px;text-align:center;">0</span><span style="display:inline-block;width:8px;text-align:center;">0</span><span style="display:inline-block;width:8px;text-align:center;">/</span><span style="display:inline-block;width:16px;text-align:center;">包</span><span style="display:inline-block;width:8px;text-align:center;">]</span></div>
<div class="t" style="left:1239px;top:458px;width:117px;text-align:center;font-size:14px;letter-spacing:3px;text-indent:3px;font-family:'Liberation Serif',serif;color:#000">三五香烟</div>
<div class="t" style="left:1239px;top:473px;width:117px;text-align:center;font-size:15px;font-family:'Liberation Sans',sans-serif;color:#000"><span style="display:inline-block;width:8px;text-align:center;">[</span><span style="display:inline-block;width:8px;text-align:center;">1</span><span style="display:inline-block;width:8px;text-align:center;">0</span><span style="display:inline-block;width:8px;text-align:center;">.</span><span style="display:inline-block;width:8px;text-align:center;">0</span><span style="display:inline-block;width:8px;text-align:center;">0</span><span style="display:inline-block;width:8px;text-align:center;">/</span><span style="display:inline-block;width:16px;text-align:center;">包</span><span style="display:inline-block;width:8px;text-align:center;">]</span></div>
<div class="t" style="left:1357px;top:458px;width:117px;text-align:center;font-size:14px;letter-spacing:3px;text-indent:3px;font-family:'Liberation Serif',serif;color:#000">开心果</div>
<div class="t" style="left:1357px;top:473px;width:117px;text-align:center;font-size:15px;font-family:'Liberation Sans',sans-serif;color:#000"><span style="display:inline-block;width:8px;text-align:center;">[</span><span style="display:inline-block;width:8px;text-align:center;">1</span><span style="display:inline-block;width:8px;text-align:center;">8</span><span style="display:inline-block;width:8px;text-align:center;">.</span><span style="display:inline-block;width:8px;text-align:center;">0</span><span style="display:inline-block;width:8px;text-align:center;">0</span><span style="display:inline-block;width:8px;text-align:center;">/</span><span style="display:inline-block;width:16px;text-align:center;">包</span><span style="display:inline-block;width:8px;text-align:center;">]</span></div>
<div class="t" style="left:1475px;top:458px;width:117px;text-align:center;font-size:14px;letter-spacing:3px;text-indent:3px;font-family:'Liberation Serif',serif;color:#000">五香花生</div>
<div class="t" style="left:1475px;top:473px;width:117px;text-align:center;font-size:15px;font-family:'Liberation Sans',sans-serif;color:#000"><span style="display:inline-block;width:8px;text-align:center;">[</span><span style="display:inline-block;width:8px;text-align:center;">1</span><span style="display:inline-block;width:8px;text-align:center;">6</span><span style="display:inline-block;width:8px;text-align:center;">.</span><span style="display:inline-block;width:8px;text-align:center;">0</span><span style="display:inline-block;width:8px;text-align:center;">0</span><span style="display:inline-block;width:8px;text-align:center;">/</span><span style="display:inline-block;width:16px;text-align:center;">盘</span><span style="display:inline-block;width:8px;text-align:center;">]</span></div>
<div class="a" style="left:1002px;top:571px;width:596px;height:207px;border:1px solid #646464"></div>
<div class="a" style="left:1003px;top:776px;width:594px;height:1px;background:#fff"></div>
<div class="a" style="left:1596px;top:572px;width:1px;height:205px;background:#fff"></div>
<div class="a" style="left:1475px;top:639px;width:117px;height:66px;background:#3399ff"></div>
<div class="a" style="left:1003px;top:638px;width:590px;height:1px;background:#c0c0c0"></div>
<div class="a" style="left:1003px;top:705px;width:590px;height:1px;background:#c0c0c0"></div>
<div class="a" style="left:1003px;top:772px;width:590px;height:1px;background:#c0c0c0"></div>
<div class="a" style="left:1120px;top:572px;width:1px;height:201px;background:#c0c0c0"></div>
<div class="a" style="left:1238px;top:572px;width:1px;height:201px;background:#c0c0c0"></div>
<div class="a" style="left:1356px;top:572px;width:1px;height:201px;background:#c0c0c0"></div>
<div class="a" style="left:1474px;top:572px;width:1px;height:201px;background:#c0c0c0"></div>
<div class="a" style="left:1592px;top:572px;width:1px;height:201px;background:#c0c0c0"></div>
<div class="t" style="left:1004px;top:599px;width:117px;text-align:center;font-size:15px;letter-spacing:3px;text-indent:3px;font-family:'Liberation Serif',serif;color:#000">数　　量</div>
<div class="t" style="left:1122px;top:599px;width:117px;text-align:center;font-size:15px;letter-spacing:3px;text-indent:3px;font-family:'Liberation Serif',serif;color:#000">点　　单</div>
<div class="t" style="left:1240px;top:599px;width:117px;text-align:center;font-size:15px;letter-spacing:3px;text-indent:3px;font-family:'Liberation Serif',serif;color:#000">删　　除</div>
<div class="t" style="left:1358px;top:599px;width:117px;text-align:center;font-size:15px;letter-spacing:3px;text-indent:3px;font-family:'Liberation Serif',serif;color:#000">等　　叫</div>
<div class="t" style="left:1476px;top:599px;width:117px;text-align:center;font-size:15px;letter-spacing:3px;text-indent:3px;font-family:'Liberation Serif',serif;color:#000">其它功能</div>
<div class="t" style="left:1004px;top:666px;width:117px;text-align:center;font-size:15px;letter-spacing:3px;text-indent:3px;font-family:'Liberation Serif',serif;color:#000">单　　价</div>
<div class="t" style="left:1122px;top:666px;width:117px;text-align:center;font-size:15px;letter-spacing:3px;text-indent:3px;font-family:'Liberation Serif',serif;color:#000">退　　单</div>
<div class="t" style="left:1240px;top:666px;width:117px;text-align:center;font-size:15px;letter-spacing:3px;text-indent:3px;font-family:'Liberation Serif',serif;color:#000">全部删除</div>
<div class="t" style="left:1358px;top:666px;width:117px;text-align:center;font-size:15px;letter-spacing:3px;text-indent:3px;font-family:'Liberation Serif',serif;color:#000">即　　起</div>
<div class="t" style="left:1476px;top:666px;width:117px;text-align:center;font-size:15px;letter-spacing:3px;text-indent:3px;font-family:'Liberation Serif',serif;color:#fff">落　　单</div>
<div class="t" style="left:1004px;top:733px;width:117px;text-align:center;font-size:15px;letter-spacing:3px;text-indent:3px;font-family:'Liberation Serif',serif;color:#000">备　　注</div>
<div class="t" style="left:1122px;top:733px;width:117px;text-align:center;font-size:15px;letter-spacing:3px;text-indent:3px;font-family:'Liberation Serif',serif;color:#000">赠　　单</div>
<div class="t" style="left:1240px;top:733px;width:117px;text-align:center;font-size:15px;letter-spacing:3px;text-indent:3px;font-family:'Liberation Serif',serif;color:#000">提成员工</div>
<div class="t" style="left:1358px;top:733px;width:117px;text-align:center;font-size:15px;letter-spacing:3px;text-indent:3px;font-family:'Liberation Serif',serif;color:#000">预订品项</div>
<div class="t" style="left:1476px;top:733px;width:117px;text-align:center;font-size:15px;letter-spacing:3px;text-indent:3px;font-family:'Liberation Serif',serif;color:#000">返　　回</div>
<div class="t" style="left:6px;top:791px;font-size:32px;color:#fff;text-shadow:0 0 1px rgba(255,255,255,.5)">合计</div>
<div class="t" style="left:72px;top:792px;font-size:32px;color:#fff;text-shadow:0 0 1px rgba(255,255,255,.5)">:</div>
<div class="t" style="left:84px;top:792px;font-size:35px;color:#fff;text-shadow:0 0 1px rgba(255,255,255,.5)"><span style="display:inline-block;width:19px;text-align:center;">2</span><span style="display:inline-block;width:19px;text-align:center;">1</span><span style="display:inline-block;width:19px;text-align:center;">4</span><span style="display:inline-block;width:19px;padding-left:3px">.</span><span style="display:inline-block;width:19px;text-align:center;">0</span><span style="display:inline-block;width:19px;text-align:center;">0</span></div>
<div class="t" style="left:886px;top:792px;font-size:12px"><span style="display:inline-block;width:12px;font-size:12.5px">合</span><span style="display:inline-block;width:12px;font-size:12.5px">计</span><span style="display:inline-block;width:12px;font-size:12.5px">总</span><span style="display:inline-block;width:12px;font-size:12.5px">金</span><span style="display:inline-block;width:12px;font-size:12.5px">额</span><span style="display:inline-block;width:11px;padding-left:2px;font-size:12px;font-weight:bold">:</span><span style="display:inline-block;width:6px;text-align:center;font-size:11px;font-family:'Liberation Sans',sans-serif">2</span><span style="display:inline-block;width:6px;text-align:center;font-size:11px;font-family:'Liberation Sans',sans-serif">1</span><span style="display:inline-block;width:6px;text-align:center;font-size:11px;font-family:'Liberation Sans',sans-serif">4</span><span style="display:inline-block;width:6px;text-align:center;font-size:11px;font-family:'Liberation Sans',sans-serif">.</span><span style="display:inline-block;width:6px;text-align:center;font-size:11px;font-family:'Liberation Sans',sans-serif">0</span><span style="display:inline-block;width:6px;text-align:center;font-size:11px;font-family:'Liberation Sans',sans-serif">0</span></div>
<div class="t" style="left:874px;top:813px;font-size:12px"><span style="display:inline-block;width:12px;font-size:12.5px">合</span><span style="display:inline-block;width:12px;font-size:12.5px">计</span><span style="display:inline-block;width:12px;font-size:12.5px">折</span><span style="display:inline-block;width:12px;font-size:12.5px">扣</span><span style="display:inline-block;width:12px;font-size:12.5px">金</span><span style="display:inline-block;width:12px;font-size:12.5px">额</span><span style="display:inline-block;width:11px;padding-left:2px;font-size:12px;font-weight:bold">:</span><span style="display:inline-block;width:6px;text-align:center;font-size:11px;font-family:'Liberation Sans',sans-serif">0</span><span style="display:inline-block;width:6px;text-align:center;font-size:11px;font-family:'Liberation Sans',sans-serif">.</span><span style="display:inline-block;width:6px;text-align:center;font-size:11px;font-family:'Liberation Sans',sans-serif">0</span><span style="display:inline-block;width:6px;text-align:center;font-size:11px;font-family:'Liberation Sans',sans-serif">0</span></div>
<div class="t" style="left:1048px;top:792px;font-size:12px"><span style="display:inline-block;width:12px;font-size:12.5px">合</span><span style="display:inline-block;width:12px;font-size:12.5px">计</span><span style="display:inline-block;width:12px;font-size:12.5px">数</span><span style="display:inline-block;width:12px;font-size:12.5px">量</span><span style="display:inline-block;width:10px;padding-left:2px;font-size:12px;font-weight:bold">:</span><span style="display:inline-block;width:6px;text-align:center;font-size:11px;font-family:'Liberation Sans',sans-serif">5</span><span style="display:inline-block;width:6px;text-align:center;font-size:11px;font-family:'Liberation Sans',sans-serif">.</span><span style="display:inline-block;width:6px;text-align:center;font-size:11px;font-family:'Liberation Sans',sans-serif">0</span><span style="display:inline-block;width:6px;text-align:center;font-size:11px;font-family:'Liberation Sans',sans-serif">0</span></div>
<div class="a" style="left:1049px;top:813px;width:13px;height:13px;background:#fff;border:1px solid #8a8a8a"></div>
<svg style="left:1049px;top:813px" width="13" height="13"><path d="M3 6 L5.5 9.5 L10 3" stroke="#000" stroke-width="2" fill="none"/></svg>
<div class="t" style="left:1066px;top:813px;font-size:12px"><span style="display:inline-block;width:12px;font-size:12.5px">特</span><span style="display:inline-block;width:12px;font-size:12.5px">价</span><span style="display:inline-block;width:12px;font-size:12.5px">不</span><span style="display:inline-block;width:12px;font-size:12.5px">打</span><span style="display:inline-block;width:12px;font-size:12.5px">折</span></div>
<div class="t" style="left:1190px;top:793px;font-size:12px"><span style="display:inline-block;width:12px;font-size:12.5px">卡</span><span style="display:inline-block;width:12px;font-size:12.5px">号</span><span style="display:inline-block;width:6px;padding-left:2px;font-size:12px;font-weight:bold">:</span></div>
<div class="t" style="left:1178px;top:813px;font-size:12px"><span style="display:inline-block;width:12px;font-size:12.5px">持</span><span style="display:inline-block;width:12px;font-size:12.5px">卡</span><span style="display:inline-block;width:12px;font-size:12.5px">人</span><span style="display:inline-block;width:6px;padding-left:2px;font-size:12px;font-weight:bold">:</span></div>
<div class="t" style="left:1286px;top:793px;font-size:12px"><span style="display:inline-block;width:12px;font-size:12.5px">卡</span><span style="display:inline-block;width:12px;font-size:12.5px">名</span><span style="display:inline-block;width:12px;font-size:12.5px">称</span><span style="display:inline-block;width:6px;padding-left:2px;font-size:12px;font-weight:bold">:</span></div>
<div class="t" style="left:1274px;top:813px;font-size:12px"><span style="display:inline-block;width:12px;font-size:12.5px">会</span><span style="display:inline-block;width:12px;font-size:12.5px">员</span><span style="display:inline-block;width:12px;font-size:12.5px">折</span><span style="display:inline-block;width:12px;font-size:12.5px">扣</span><span style="display:inline-block;width:9px;padding-left:2px;font-size:12px;font-weight:bold">:</span><span style="display:inline-block;width:6px;text-align:center;font-size:11px;font-family:'Liberation Sans',sans-serif">0</span><span style="display:inline-block;width:6px;text-align:center;font-size:11px;font-family:'Liberation Sans',sans-serif">.</span><span style="display:inline-block;width:6px;text-align:center;font-size:11px;font-family:'Liberation Sans',sans-serif">0</span><span style="display:inline-block;width:6px;text-align:center;font-size:11px;font-family:'Liberation Sans',sans-serif">0</span></div>
<div class="t" style="left:1383px;top:793px;font-size:12px"><span style="display:inline-block;width:12px;font-size:12.5px">卡</span><span style="display:inline-block;width:12px;font-size:12.5px">中</span><span style="display:inline-block;width:12px;font-size:12.5px">余</span><span style="display:inline-block;width:12px;font-size:12.5px">额</span><span style="display:inline-block;width:9px;padding-left:2px;font-size:12px;font-weight:bold">:</span><span style="display:inline-block;width:6px;text-align:center;font-size:11px;font-family:'Liberation Sans',sans-serif">0</span><span style="display:inline-block;width:6px;text-align:center;font-size:11px;font-family:'Liberation Sans',sans-serif">.</span><span style="display:inline-block;width:6px;text-align:center;font-size:11px;font-family:'Liberation Sans',sans-serif">0</span><span style="display:inline-block;width:6px;text-align:center;font-size:11px;font-family:'Liberation Sans',sans-serif">0</span></div>
<div class="t" style="left:1383px;top:813px;font-size:12px"><span style="display:inline-block;width:12px;font-size:12.5px">卡</span><span style="display:inline-block;width:12px;font-size:12.5px">中</span><span style="display:inline-block;width:12px;font-size:12.5px">积</span><span style="display:inline-block;width:12px;font-size:12.5px">分</span><span style="display:inline-block;width:9px;padding-left:2px;font-size:12px;font-weight:bold">:</span><span style="display:inline-block;width:6px;text-align:center;font-size:11px;font-family:'Liberation Sans',sans-serif">0</span><span style="display:inline-block;width:6px;text-align:center;font-size:11px;font-family:'Liberation Sans',sans-serif">.</span><span style="display:inline-block;width:6px;text-align:center;font-size:11px;font-family:'Liberation Sans',sans-serif">0</span><span style="display:inline-block;width:6px;text-align:center;font-size:11px;font-family:'Liberation Sans',sans-serif">0</span></div>
<div class="t" style="left:1519px;top:788px;font-size:12px"><span style="display:inline-block;width:12px;font-size:12.5px">锁</span><span style="display:inline-block;width:12px;font-size:12.5px">屏</span></div>
<div class="t" style="left:1571px;top:788px;font-size:12px"><span style="display:inline-block;width:12px;font-size:12.5px">界</span><span style="display:inline-block;width:12px;font-size:12.5px">面</span></div>
<div class="t" style="left:1519px;top:815px;font-size:12px"><span style="display:inline-block;width:12px;font-size:12.5px">公</span><span style="display:inline-block;width:12px;font-size:12.5px">告</span></div>
<div class="t" style="left:1571px;top:815px;font-size:12px"><span style="display:inline-block;width:12px;font-size:12.5px">设</span><span style="display:inline-block;width:12px;font-size:12.5px">置</span></div>
<svg style="left:1498px;top:785px" width="18" height="18"><circle cx="5" cy="5" r="3.5" fill="#e8e8e8" stroke="#333"/><path d="M4 8 V15 L5 16 L6 15 V13 H7 V12 H6 V10" fill="#ddd" stroke="#333"/><circle cx="9" cy="5" r="3.2" fill="#e0e040" stroke="#333"/><path d="M10 7 L16 13" stroke="#333" stroke-width="3"/><path d="M10 7 L16 13" stroke="#e8e050" stroke-width="1.5"/></svg>
<svg style="left:1551px;top:787px" width="16" height="15"><rect x="0.5" y="0.5" width="15" height="13" rx="0.5" fill="#e0f4ff" stroke="#2040c0"/><rect x="1" y="1" width="14" height="2.5" fill="#3070e0"/><rect x="2.5" y="6" width="3" height="2" fill="#2a5ad0"/><rect x="6.5" y="6" width="3" height="2" fill="#e0a020"/><rect x="10.5" y="6" width="3" height="2" fill="#20a040"/><path d="M2.5 10h3M6.5 10h3M10.5 10h3" stroke="#2a5ad0"/></svg>
<svg style="left:1499px;top:813px" width="17" height="16"><defs><linearGradient id="gs" x1="0" y1="0" x2="1" y2="0"><stop offset="0" stop-color="#a0e0ff"/><stop offset="1" stop-color="#1a90e0"/></linearGradient></defs><rect x="0.5" y="5" width="2.5" height="5.5" fill="#000"/><path d="M3 5 L8.5 0.8 V14.7 L3 10.5Z" fill="url(#gs)" stroke="#000" stroke-width="1"/><path d="M10.3 5.2 Q12 7.75 10.3 10.3 M12.3 2.8 Q15.8 7.75 12.3 12.7" stroke="#000" stroke-width="1.1" fill="none"/></svg>
<svg style="left:1551px;top:813px" width="16" height="16"><defs><radialGradient id="gg" cx="0.4" cy="0.35" r="0.7"><stop offset="0" stop-color="#ffe070"/><stop offset="1" stop-color="#e88000"/></radialGradient></defs><path d="M12.12 5.60 L14.26 6.13 L14.26 8.87 L12.12 9.40 L12.11 9.43 L13.25 11.31 L11.31 13.25 L9.43 12.11 L9.40 12.12 L8.87 14.26 L6.13 14.26 L5.60 12.12 L5.57 12.11 L3.69 13.25 L1.75 11.31 L2.89 9.43 L2.88 9.40 L0.74 8.87 L0.74 6.13 L2.88 5.60 L2.89 5.57 L1.75 3.69 L3.69 1.75 L5.57 2.89 L5.60 2.88 L6.13 0.74 L8.87 0.74 L9.40 2.88 L9.43 2.89 L11.31 1.75 L13.25 3.69 L12.11 5.57Z" fill="url(#gg)" stroke="#111" stroke-width="1.1" stroke-linejoin="round"/><circle cx="7.5" cy="7.5" r="1.8" fill="#fff" stroke="#111" stroke-width="1"/></svg>
<div class="a" style="left:0;top:836px;width:1600px;height:1px;background:#fff"></div>
<div class="t" style="left:1px;top:840px;font-size:12px"><span style="display:inline-block;width:12px;font-size:12.5px">操</span><span style="display:inline-block;width:12px;font-size:12.5px">作</span><span style="display:inline-block;width:12px;font-size:12.5px">员</span></div>
<div class="t" style="left:48px;top:840px;font-size:12px"><span style="display:inline-block;width:12px;font-size:12.5px">超</span><span style="display:inline-block;width:12px;font-size:12.5px">级</span><span style="display:inline-block;width:12px;font-size:12.5px">管</span><span style="display:inline-block;width:12px;font-size:12.5px">理</span><span style="display:inline-block;width:12px;font-size:12.5px">员</span></div>
<div class="t" style="left:1328px;top:840px;font-size:12px"><span style="display:inline-block;width:12px;font-size:12.5px">管</span><span style="display:inline-block;width:12px;font-size:12.5px">理</span><span style="display:inline-block;width:12px;font-size:12.5px">员</span><span style="display:inline-block;width:12px;font-size:12.5px">组</span></div>
<div class="t" style="left:1393px;top:840px;font-size:12px"><span style="display:inline-block;width:6px;text-align:center;font-size:11.5px;font-family:'Liberation Mono',monospace">A</span><span style="display:inline-block;width:6px;text-align:center;font-size:11.5px;font-family:'Liberation Mono',monospace">C</span><span style="display:inline-block;width:6px;text-align:center;font-size:11.5px;font-family:'Liberation Mono',monospace">C</span><span style="display:inline-block;width:6px;text-align:center;font-size:11.5px;font-family:'Liberation Mono',monospace">E</span><span style="display:inline-block;width:6px;text-align:center;font-size:11.5px;font-family:'Liberation Mono',monospace">S</span><span style="display:inline-block;width:6px;text-align:center;font-size:11.5px;font-family:'Liberation Mono',monospace">S</span></div>
<div class="t" style="left:1439px;top:840px;font-size:12px"><span style="display:inline-block;width:6px;text-align:center;font-size:11px;font-family:'Liberation Sans',sans-serif">[</span><span style="display:inline-block;width:12px;font-size:12.5px">本</span><span style="display:inline-block;width:12px;font-size:12.5px">地</span><span style="display:inline-block;width:12px;font-size:12.5px">默</span><span style="display:inline-block;width:12px;font-size:12.5px">认</span><span style="display:inline-block;width:12px;font-size:12.5px">数</span><span style="display:inline-block;width:12px;font-size:12.5px">据</span><span style="display:inline-block;width:12px;font-size:12.5px">库</span><span style="display:inline-block;width:12px;font-size:12.5px">文</span><span style="display:inline-block;width:12px;font-size:12.5px">件</span><span style="display:inline-block;width:6px;text-align:center;font-size:11px;font-family:'Liberation Sans',sans-serif">]</span></div>
<div class="a" style="left:1585px;top:840px;width:15px;height:18px;background:#ececec"></div>
<svg style="left:1586px;top:844px" width="13" height="13"><path d="M12 2 L2 12 M12 6 L6 12 M12 10 L10 12" stroke="#fff" stroke-width="1"/><path d="M12 3 L3 12 M12 7 L7 12" stroke="#909090" stroke-width="1"/></svg>
</body></html>
